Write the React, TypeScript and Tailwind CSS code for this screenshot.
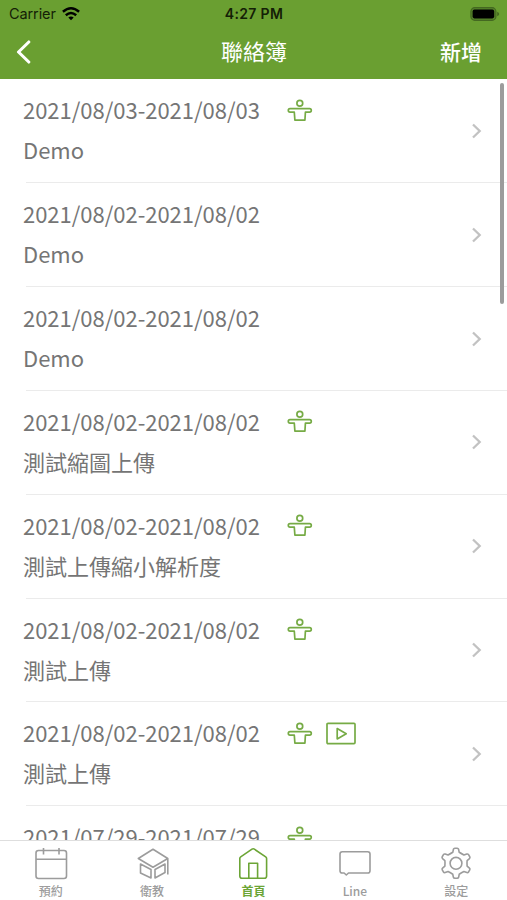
import type { ReactNode } from "react";

type Entry = {
  range: string;
  title?: string;
  photo?: boolean;
  video?: boolean;
};

const ENTRIES: Entry[] = [
  { range: "2021/08/03-2021/08/03", title: "Demo", photo: true },
  { range: "2021/08/02-2021/08/02", title: "Demo" },
  { range: "2021/08/02-2021/08/02", title: "Demo" },
  { range: "2021/08/02-2021/08/02", title: "測試縮圖上傳", photo: true },
  { range: "2021/08/02-2021/08/02", title: "測試上傳縮小解析度", photo: true },
  { range: "2021/08/02-2021/08/02", title: "測試上傳", photo: true },
  { range: "2021/08/02-2021/08/02", title: "測試上傳", photo: true, video: true },
  { range: "2021/07/29-2021/07/29", photo: true },
];

export default function App() {
  return (
    <div className="relative flex h-[900px] w-[507px] flex-col overflow-hidden bg-white font-['Noto_Sans_CJK_TC',sans-serif]">
      <header className="h-[79px] shrink-0 bg-[#6a9f31]">
        <StatusBar />
        <NavBar />
      </header>

      <main className="min-h-0 flex-1 overflow-hidden">
        {ENTRIES.map((entry, i) => (
          <EntryRow key={i} entry={entry} />
        ))}
      </main>

      {/* Scroll indicator floats over the list */}
      <div className="absolute top-[83px] right-[3.5px] h-[221px] w-[3.5px] rounded-full bg-[#9c9c9c]" />

      <TabBar />
    </div>
  );
}

function StatusBar() {
  return (
    <div className="grid h-[27px] grid-cols-3 items-center pr-[7px] pl-[9px] font-['Inter',sans-serif] text-[14.5px] text-[#142006]">
      <div className="flex items-center gap-[6px]">
        <span className="tracking-[-0.1px]">Carrier</span>
        <WifiIcon />
      </div>
      <span className="pr-[1px] text-center text-[14px] font-semibold tracking-[0.35px] whitespace-nowrap">
        4:27 PM
      </span>
      <div className="flex justify-end">
        <BatteryIcon />
      </div>
    </div>
  );
}

function NavBar() {
  return (
    <div className="grid h-[50px] grid-cols-3 items-center pr-[25px] pl-[16px] text-white">
      <button type="button" aria-label="Back" className="justify-self-start">
        <svg width="16" height="24" viewBox="0 0 16 24" fill="none">
          <path d="M12.8 2 L2.5 12 L12.8 22" stroke="currentColor" strokeWidth="3.1" strokeLinecap="round" strokeLinejoin="round" />
        </svg>
      </button>
      <h1 className="pb-[4px] pl-[10px] text-center text-[22px] leading-none">聯絡簿</h1>
      <button type="button" className="justify-self-end pb-[2px] text-[21px] leading-none font-medium">
        新增
      </button>
    </div>
  );
}

function EntryRow({ entry }: { entry: Entry }) {
  return (
    <div className="ml-[23px] h-[103.83px]">
      <div className="flex h-[103.83px] items-center justify-between pr-[25px]">
        <div className="h-[83px] text-[22px] leading-[40px] text-[#757575]">
          <div className="flex h-[40px] items-center">
            <span className="w-[263.5px] tracking-[-0.03px] whitespace-nowrap">{entry.range}</span>
            <div className="flex items-center gap-[13px] pt-[3px] text-[#76ab45]">
              {entry.photo && <PersonIcon />}
              {entry.video && <VideoIcon />}
            </div>
          </div>
          {entry.title && <p>{entry.title}</p>}
        </div>
        <svg width="11" height="16" viewBox="0 0 11 16" fill="none" className="shrink-0">
          <path d="M2 1.5 L8.7 8 L2 14.5" stroke="#c2c2c2" strokeWidth="2.3" />
        </svg>
      </div>
      <div className="-mt-[0.5px] ml-[3px] h-px bg-[#ebebeb]" />
    </div>
  );
}

function TabBar() {
  return (
    <nav className="grid h-[60px] shrink-0 grid-cols-5 border-t border-[#dedede] bg-white">
      <Tab label="預約">
        <rect x="2" y="4.5" width="30.5" height="28" rx="2.5" />
        <path d="M2 13.2 H32.5 M9.5 2 V8.5 M25 2 V8.5" />
      </Tab>
      <Tab label="衛教">
        <path d="M3.3 12.5 L18 3.3 L32.8 12.5 L18 21.2 Z M32.8 12.5 V28.5" />
        <path d="M5.5 18 L16 23.5 V32 L5.5 27 Z M30 18 L20 23.5 V32 L30 26.5 Z" />
      </Tab>
      <Tab label="首頁" active>
        <path d="M3.8 12.6 Q3.8 11.5 4.7 10.9 L16 3.2 Q17.2 2.4 18.4 3.2 L29.7 10.9 Q30.6 11.5 30.6 12.6 V30 Q30.6 32.3 28.3 32.3 H6.1 Q3.8 32.3 3.8 30 Z" />
        <path d="M12.8 32.3 V17.2 H21.6 V32.3" />
      </Tab>
      <Tab label="Line">
        <path d="M4.3 5.8 H29.7 Q32 5.8 32 8.1 V24.7 Q32 27 29.7 27 H10.5 L8.3 29 L6.1 27 H4.3 Q2 27 2 24.7 V8.1 Q2 5.8 4.3 5.8 Z" />
      </Tab>
      <Tab label="設定">
        <g transform="translate(17 17.3)">
          <path d="M-3.2 -11 L-2.6 -14 Q-2.3 -15 -1.2 -15 H1.2 Q2.3 -15 2.6 -14 L3.2 -11 Q5.5 -9.6 7.93 -8.27 L10.82 -9.25 Q12 -9.5 12.56 -8.64 L13.76 -6.56 Q14.3 -5.6 13.42 -4.75 L11.13 -2.73 Q10.8 0 11.13 2.73 L13.42 4.75 Q14.3 5.6 13.76 6.56 L12.56 8.64 Q12 9.5 10.82 9.25 L7.93 8.27 Q5.5 9.6 3.2 11 L2.6 14 Q2.3 15 1.2 15 H-1.2 Q-2.3 15 -2.6 14 L-3.2 11 Q-5.5 9.6 -7.93 8.27 L-10.82 9.25 Q-12 9.5 -12.56 8.64 L-13.76 6.56 Q-14.3 5.6 -13.42 4.75 L-11.13 2.73 Q-10.8 0 -11.13 -2.73 L-13.42 -4.75 Q-14.3 -5.6 -13.76 -6.56 L-12.56 -8.64 Q-12 -9.5 -10.82 -9.25 L-7.93 -8.27 Q-5.5 -9.6 -3.2 -11 Z" />
          <circle r="5.9" />
        </g>
      </Tab>
    </nav>
  );
}

type TabProps = {
  label: string;
  active?: boolean;
  children: ReactNode;
};

function Tab({ label, active, children }: TabProps) {
  return (
    <button
      type="button"
      className={`flex flex-col items-center pt-[5px] text-[12px] leading-[18px] ${active ? "text-[#6ca536]" : "text-[#9c9c9c]"}`}
    >
      <svg width="34" height="36" viewBox="0 0 34 36" fill="none" stroke="currentColor" strokeWidth="1.6" strokeLinejoin="round">
        {children}
      </svg>
      <span className={active ? "font-bold" : "font-medium"}>{label}</span>
    </button>
  );
}

function PersonIcon() {
  return (
    <svg width="26" height="24" viewBox="0 0 26 24" fill="none" stroke="currentColor" strokeWidth="1.7" strokeLinejoin="round">
      <circle cx="12.8" cy="4.3" r="2.9" />
      <path d="M3 9.6 H22.6 Q24.3 9.6 24.3 11.3 Q24.3 13.2 22.6 13.2 H18.4 L17.9 21.2 H7.9 L7.3 13.2 H3 Q1.3 13.2 1.3 11.3 Q1.3 9.6 3 9.6 Z" />
    </svg>
  );
}

function VideoIcon() {
  return (
    <svg width="30" height="24" viewBox="0 0 30 24" fill="none" stroke="currentColor" strokeWidth="1.7" strokeLinejoin="round">
      <rect x="1" y="1.3" width="28" height="20.3" rx="1" />
      <path d="M11.2 6.5 L20.2 11.7 L11.2 16.9 Z" />
    </svg>
  );
}

function WifiIcon() {
  return (
    <svg width="18" height="14" viewBox="0 0 18 14" fill="none" stroke="#000" strokeWidth="2.5">
      <path d="M0.9 4.8 Q9 -2.2 17.1 4.8" />
      <path d="M3.8 8.2 Q9 3.8 14.2 8.2" />
      <path d="M9 13.3 L6.3 10.4 Q9 8.4 11.7 10.4 Z" fill="#000" stroke="none" />
    </svg>
  );
}

function BatteryIcon() {
  return (
    <svg width="30" height="14" viewBox="0 0 30 14" fill="none">
      <rect x="0.9" y="0.7" width="25" height="12.6" rx="3.8" fill="#55832a" stroke="#446821" strokeWidth="1.2" />
      <rect x="2.6" y="2.6" width="21.6" height="8.8" rx="1.8" fill="#000" />
      <path d="M27.2 4.8 Q29.2 5.6 29.2 7 Q29.2 8.4 27.2 9.2 Z" fill="#446821" />
    </svg>
  );
}
